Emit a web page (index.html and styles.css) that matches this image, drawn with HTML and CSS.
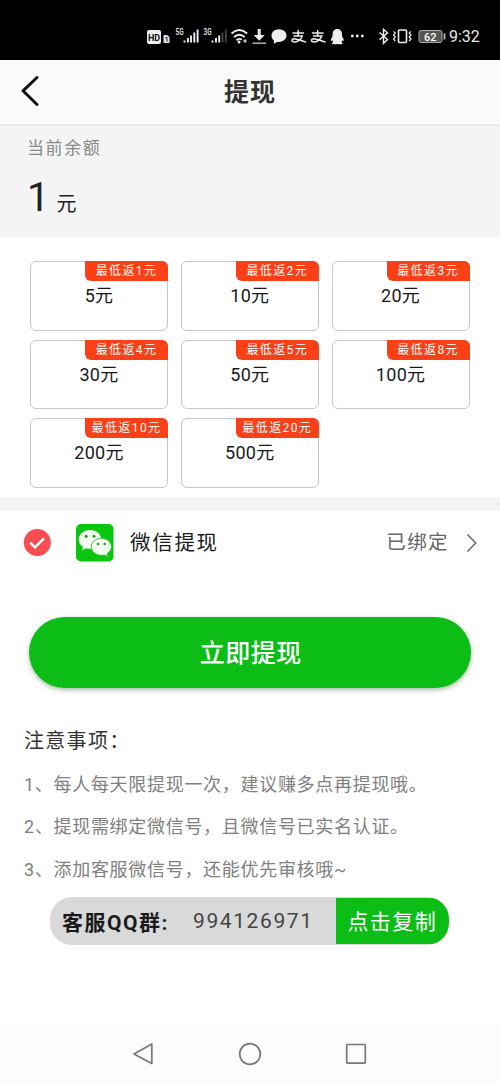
FILE: index.html
```html
<!DOCTYPE html>
<html lang="zh-CN">
<head>
<meta charset="utf-8">
<meta name="viewport" content="width=device-width, initial-scale=1">
<title>提现</title>
<link rel="stylesheet" href="styles.css">
</head>
<body>
<div class="status">
  <svg class="status-left" width="222" height="32" viewBox="145 20 222 32">
    <rect x="147" y="30" width="14" height="14" rx="2" fill="#eee"/>
    <text x="154" y="40.5" class="hd">HD</text>
    <path d="M163.500 35h3.500l2.500 2v6h-6z" fill="#ddd"/>
    <path d="M165.500 37.500h1.500v4" fill="none" stroke="#222"/>
    <text x="175.500" y="35" class="net" textLength="8" lengthAdjust="spacingAndGlyphs">5G</text>
    <path d="M184.500 42.500v-2M188 42.500v-4.500M191 42.500v-7M194.300 42.500v-10M197.600 42.500v-13" stroke="#eee" stroke-width="1.900"/>
    <text x="203.500" y="35" class="net" textLength="8" lengthAdjust="spacingAndGlyphs">3G</text>
    <path d="M212.500 42.500v-2M216 42.500v-4.500M219.200 42.500v-7" stroke="#eee" stroke-width="1.900"/>
    <path d="M222.500 42.500v-10M225.800 42.500v-13" stroke="#444" stroke-width="1.900"/>
    <g fill="none" stroke="#eee" stroke-width="1.900">
      <path d="M231.500 33.500q7.800-6.800 15.600 0M234 37q5.300-4.700 10.600 0M236.500 40.200q2.800-2.400 5.300-.5"/>
    </g>
    <circle cx="239" cy="42" r="1.500" fill="#eee"/><circle cx="245" cy="41" r="1.700" fill="#bbb"/>
    <path d="M257.700 29h3v6h4l-5.500 5.700-5.500-5.700h4z" fill="#eee"/>
    <path d="M252.500 43.200h13.500" stroke="#bbb" stroke-width="1.400"/>
    <path d="M279 29.300c4.300 0 7.500 2.800 7.500 6.300s-3.200 6.300-7.500 6.300l-2 .2-3.300 1.600.3-3c-1.600-1.300-2.500-3-2.500-5.100 0-3.500 3.200-6.300 7.500-6.300z" fill="#eee"/>
    <g id="pay" fill="none" stroke="#eee" stroke-width="1.500" stroke-linecap="round">
      <path d="M293 33h10.500M298.200 30.500v5.500M294 36h8.300c-1 3-4.300 6-7.500 6-3.500 0-3.800-3.200-.6-3.300 3.500 0 6.800 2.200 11.300 3.200"/>
    </g>
    <use href="#pay" x="19.500"/>
    <path d="M337.300 29c3 0 4.700 2.200 4.700 5.100v2l1.700 3.400c.4 1.400-.5 2-1.300.7l-.9 2 1.400 1.200c0 1-4 .9-5.600.5-1.600.4-5.600.5-5.600-.5l1.400-1.200-.9-2c-.8 1.300-1.700.7-1.300-.7l1.700-3.400v-2c0-2.900 1.700-5.100 4.700-5.100z" fill="#eee"/>
    <g fill="#eee"><circle cx="352.300" cy="36" r="1.400"/><circle cx="357.300" cy="36" r="1.400"/><circle cx="362.300" cy="36" r="1.400"/></g>
  </svg>
  <svg class="status-right" width="72" height="32" viewBox="376 20 72 32">
    <path d="M379.500 32.500l8 7-4 3.800V29.300l4 3.600-8 6.800" fill="none" stroke="#eee" stroke-width="1.400"/>
    <rect x="398.500" y="30" width="8" height="12.500" rx="1" fill="none" stroke="#eee" stroke-width="1.600"/>
    <path d="M393.500 31.500l1.800 1.500-1.800 2 1.800 2-1.800 2 1.800 2M411 31.500l-1.800 1.500 1.800 2-1.800 2 1.800 2-1.800 2" fill="none" stroke="#eee" stroke-width="1.200"/>
    <rect x="419" y="30.500" width="23" height="12" rx="2" fill="#555" stroke="#aaa"/>
    <path d="M444.500 33.500v6" stroke="#bbb" stroke-width="1.800"/>
    <text x="430.300" y="40.500" class="battery">62</text>
  </svg>
  <span class="time">9:32</span>
</div>

<header class="header">
  <svg class="back" width="20" height="32" viewBox="0 0 20 32"><path d="M17 2.500L3 15.800 17 29.500" fill="none" stroke="#111" stroke-width="3" stroke-linecap="round" stroke-linejoin="round"/></svg>
  <h1 class="title">提现</h1>
</header>

<section class="balance">
  <div class="balance-label">当前余额</div>
  <div class="balance-value"><span class="num">1</span><span class="unit">元</span></div>
</section>

<section class="grid">
  <div class="card"><span class="badge">最低返1元</span><span class="amount">5元</span></div>
  <div class="card"><span class="badge">最低返2元</span><span class="amount">10元</span></div>
  <div class="card"><span class="badge">最低返3元</span><span class="amount">20元</span></div>
  <div class="card"><span class="badge">最低返4元</span><span class="amount">30元</span></div>
  <div class="card"><span class="badge">最低返5元</span><span class="amount">50元</span></div>
  <div class="card"><span class="badge">最低返8元</span><span class="amount">100元</span></div>
  <div class="card"><span class="badge">最低返10元</span><span class="amount">200元</span></div>
  <div class="card"><span class="badge">最低返20元</span><span class="amount">500元</span></div>
</section>

<section class="method">
  <svg width="28" height="28" viewBox="0 0 28 28"><circle cx="14.300" cy="13.500" r="13.500" fill="#f94d54"/><path d="M7.300 13.700l4.700 4.600 9-9" fill="none" stroke="#fff" stroke-width="2.500"/></svg>
  <svg class="wechat" width="38" height="38" viewBox="0 0 38 38">
    <rect width="37.500" height="37.500" rx="5" fill="#09c60f"/>
    <path d="M14 6C7.700 6 2.800 10.100 2.800 15.400c0 3 1.600 5.600 4.200 7.400l-1.200 3.700 4.400-2.300c1.200.4 2.500.6 3.800.6 6.300 0 11.300-4.100 11.300-9.400S20.300 6 14 6z" fill="#f2fff1"/>
    <path d="M25.400 14.300c-5.700 0-10.200 3.700-10.200 8.500s4.500 8.500 10.200 8.500c1.100 0 2.200-.1 3.200-.4l3.400 1.900-.9-3.200c2.600-1.600 4.300-4 4.300-6.800 0-4.800-4.400-8.500-10-8.500z" fill="#f2fff1" stroke="#39b838" stroke-width=".9"/>
    <g fill="#269c24"><circle cx="10.200" cy="12.300" r="1.500"/><circle cx="18" cy="12.300" r="1.500"/><circle cx="22" cy="20" r="1.300"/><circle cx="28.700" cy="20" r="1.300"/></g>
  </svg>
  <span class="method-name">微信提现</span>
  <span class="method-state">已绑定</span>
  <svg class="chevron" width="12" height="20" viewBox="0 0 12 20"><path d="M1.500 1.500l8.300 8.500-8.300 8.500" fill="none" stroke="#666" stroke-width="1.500"/></svg>
</section>

<button class="submit">立即提现</button>

<section class="notes">
  <h2 class="notes-title">注意事项：</h2>
  <p class="note">1、每人每天限提现一次，建议赚多点再提现哦。</p>
  <p class="note">2、提现需绑定微信号，且微信号已实名认证。</p>
  <p class="note">3、添加客服微信号，还能优先审核哦~</p>
</section>

<div class="qq">
  <span class="qq-label">客服QQ群:</span>
  <span class="qq-num">994126971</span>
  <button class="copy">点击复制</button>
</div>

<nav class="nav">
  <svg width="24" height="24" viewBox="0 0 24 24"><path d="M19.800 2v19.500L2 12z"/></svg>
  <svg width="24" height="24" viewBox="0 0 24 24"><circle cx="12" cy="12" r="10.300"/></svg>
  <svg width="24" height="24" viewBox="0 0 24 24"><rect x="2.700" y="2.500" width="18.600" height="18.600" rx=".8"/></svg>
</nav>
</body>
</html>
```

FILE: styles.css
```css
* { box-sizing: border-box; }
body {
  margin: 0;
  width: 500px;
  height: 1083px;
  display: flex;
  flex-direction: column;
  background: #fff;
  color: #1a1a1a;
  font-family: Roboto, "Noto Sans CJK SC", sans-serif;
}
svg { display: block; flex: none; }
h1, h2, p { margin: 0; font-weight: 400; }
button { border: 0; padding: 0; font-family: inherit; color: #fff; background: #0bbd15; }

.status { height: 60px; flex: none; background: #000; display: flex; align-items: flex-start; padding: 20px 0 0 145px; }
.status-right { margin-left: 9px; }
.status text { font-family: Roboto, sans-serif; }
.hd { font-size: 9px; font-weight: 700; fill: #111; text-anchor: middle; }
.net { font-size: 9px; font-weight: 500; fill: #eee; }
.battery { font-size: 11px; font-weight: 500; fill: #fff; text-anchor: middle; }
.time { margin-left: 1px; font-size: 16px; line-height: 34px; color: #e8e8e8; }

.header { height: 66px; flex: none; background: #fafafa; border-bottom: 2px solid #e9e9e9; display: flex; align-items: center; padding: 0 20px; }
.back { margin-top: -3px; }
.title { flex: 1; margin-right: 20px; padding-top: 2px; text-align: center; font-size: 25px; line-height: 64px; font-weight: 700; letter-spacing: 1px; color: #333; }

.balance { height: 111px; flex: none; background: #f4f4f4; padding: 10px 27px 0; }
.balance-label { font-size: 17px; line-height: 25px; letter-spacing: 1.600px; color: #888; }
.balance-value { display: flex; align-items: baseline; gap: 7px; margin-top: 12px; line-height: 50px; color: #222; }
.num { font-size: 40px; }
.unit { font-size: 20px; }

.grid { height: 260px; flex: none; padding: 24px 30px 0; display: grid; grid-template-columns: repeat(3, 138px); grid-auto-rows: 69.500px; column-gap: 12.800px; row-gap: 9.200px; align-content: start; }
.card { position: relative; border: 1.500px solid #c8c8c8; border-radius: 6px; text-align: center; padding-top: 21px; }
.badge { position: absolute; top: -1px; right: -1px; width: 83px; height: 20px; border-radius: 0 6px 0 6px; background: #fb4017; color: #fff; font-size: 12px; line-height: 21px; letter-spacing: 1.400px; white-space: nowrap; }
.amount { display: block; font-size: 18px; line-height: 26px; letter-spacing: .3px; }

.method { height: 77px; flex: none; border-top: 14px solid #f3f3f3; display: flex; align-items: center; padding: 0 22px 0 23px; }
.wechat { margin-left: 25px; }
.method-name { margin-left: 16px; font-size: 20.500px; letter-spacing: 1.700px; line-height: 30px; }
.method-state { margin-left: auto; padding-top: 1px; font-size: 19.500px; letter-spacing: 1.400px; line-height: 30px; color: #666; }
.chevron { margin-left: 17px; }

.submit { width: 441.500px; height: 70.500px; flex: none; margin: 43px 0 0 29px; padding: 4px 0 0 2px; border-radius: 36px; box-shadow: 0 2px 5px rgba(0, 60, 0, .35); font-size: 25px; font-weight: 500; letter-spacing: .5px; line-height: 66px; }

.notes { padding: 37px 24px 0; }
.notes-title { font-size: 20px; line-height: 32px; letter-spacing: 1.300px; color: #333; }
.note { font-size: 18px; line-height: 42.600px; letter-spacing: .7px; color: #808080; white-space: nowrap; }
.notes-title + .note { margin-top: 7px; }

.qq { width: 398.500px; height: 48px; flex: none; margin: 5.700px 0 0 50px; border-radius: 22px; overflow: hidden; background: #d9d9d9; display: flex; align-items: center; padding-left: 12px; }
.qq-label { width: 131px; font-size: 21px; font-weight: 700; letter-spacing: 1.500px; white-space: nowrap; }
.qq-num { width: 143px; font-size: 21px; letter-spacing: 1.600px; color: #444; }
.copy { width: 112.500px; height: 46px; padding: 0 0 2px; font-size: 21px; letter-spacing: 1.400px; border-radius: 0 18px 18px 0; }

.nav { height: 59px; flex: none; margin-top: auto; background: #fcfcfc; display: flex; align-items: center; justify-content: center; gap: 82px; }
.nav svg { fill: none; stroke: #777; stroke-width: 1.700; stroke-linejoin: round; }
```
